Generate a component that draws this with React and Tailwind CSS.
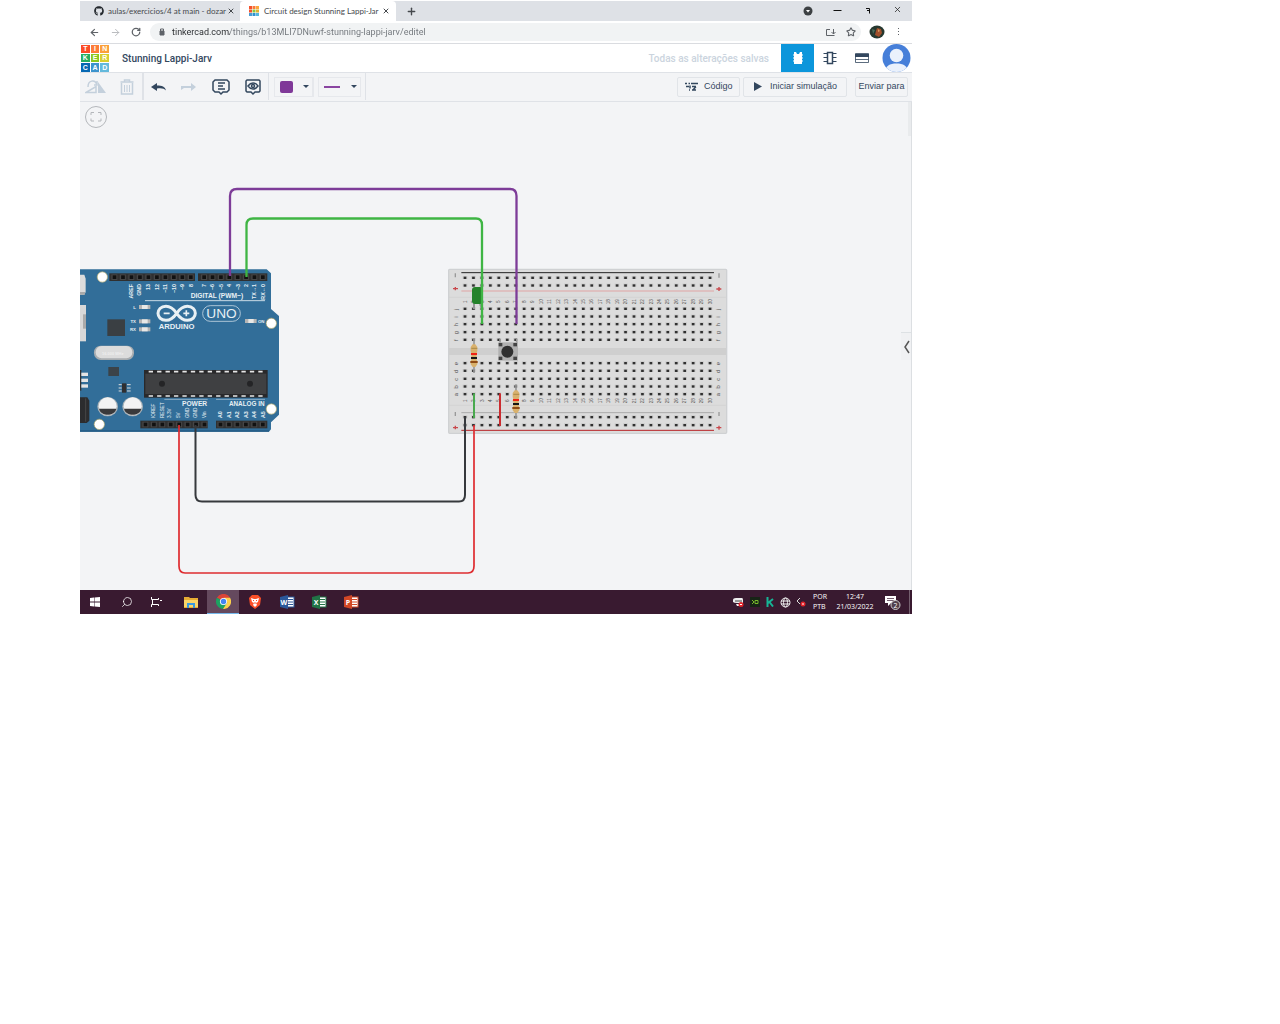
import React from "react";
import { FaGithub } from "react-icons/fa";
import { ArrowLeft, ArrowRight, RotateCw, Plus, X, Search, Star } from "lucide-react";

const range = (n) => Array.from({ length: n }, (_, i) => i);

/* ---------- Browser chrome ---------- */

const LOGO = [
  ["T", "bg-[#fb4b26]"], ["I", "bg-[#fc7c3a]"], ["N", "bg-[#fba03a]"],
  ["K", "bg-[#27ae60]"], ["E", "bg-[#8cc81e]"], ["R", "bg-[#d8cf30]"],
  ["C", "bg-[#0668b3]"], ["A", "bg-[#3d94cd]"], ["D", "bg-[#63b9dc]"],
];

function TinkercadFavicon() {
  const colors = ["#f4512c", "#f9793d", "#fba93c", "#f4512c", "#8bc53f", "#e0b030", "#4a9bd0", "#2f8fd0", "#54b7dd"];
  return (
    <svg className="h-[10px] w-[10px] shrink-0" viewBox="0 0 10 10" aria-hidden="true">
      {colors.map((c, i) => (
        <rect key={i} x={(i % 3) * 3.5} y={Math.floor(i / 3) * 3.5} width="3" height="3" fill={c} />
      ))}
    </svg>
  );
}

function TabStrip() {
  return (
    <div className="flex h-5 items-stretch bg-[#dee1e6] text-[#45494d]">
      <div className="flex w-40 items-center pl-[14px] pr-1">
        <FaGithub className="h-[10px] w-[10px] shrink-0 text-[#24292e]" />
        <a href="#github" className="ml-1 w-[115px] whitespace-nowrap font-['Lato'] text-[8px]">aulas/exercicios/4 at main - dozar</a>
        <button aria-label="Fechar guia" className="ml-[3px] flex h-3 w-3 items-center justify-center"><X size={8} strokeWidth={3} /></button>
      </div>
      <div className="flex w-[156px] items-center rounded-t bg-white pl-[9px] pr-1">
        <TinkercadFavicon />
        <a href="#circuit" className="ml-[5px] w-[113px] whitespace-nowrap font-['Lato'] text-[8px]">Circuit design Stunning Lappi-Jar</a>
        <button aria-label="Fechar guia" className="ml-[3px] flex h-3 w-3 items-center justify-center"><X size={8} strokeWidth={3} /></button>
      </div>
      <button aria-label="Nova guia" className="flex w-[30px] items-center justify-center"><Plus size={11} strokeWidth={3} /></button>
      <div className="flex-1" />
      <button aria-label="Pesquisar guias" className="flex w-6 items-center justify-center">
        <svg width="10" height="10" viewBox="0 0 10 10"><circle cx="5" cy="5" r="4.500" fill="#3c4043" /><path d="M3 4h4L5 6.500z" fill="#fff" /></svg>
      </button>
      <button aria-label="Minimizar" className="ml-[1px] flex w-8 items-center justify-center">
        <svg width="9" height="9" viewBox="0 0 9 9"><path d="M0.500 3.500h8" stroke="#111" /></svg>
      </button>
      <button aria-label="Restaurar" className="flex w-[30px] items-center justify-center">
        <svg width="6" height="8" viewBox="0 0 6 8"><path d="M1 1.500h3.500v5M2 3.500h2" fill="none" stroke="#111" /></svg>
      </button>
      <button aria-label="Fechar" className="flex w-[29px] items-center justify-center pb-1 text-[#222]"><X size={9} /></button>
    </div>
  );
}

function AddressBar() {
  return (
    <div className="flex h-[23px] items-center border-b border-[#dadce0] bg-white text-[#5f6368]">
      <button aria-label="Voltar" className="ml-2 flex w-3 justify-center"><ArrowLeft size={11} strokeWidth={2.5} /></button>
      <button aria-label="Avançar" className="ml-[9px] flex w-3 justify-center text-[#b5b7ba]"><ArrowRight size={11} /></button>
      <button aria-label="Recarregar" className="ml-[9px] flex w-3 justify-center"><RotateCw size={10} strokeWidth={3} /></button>
      <div className="ml-2 flex h-[18px] flex-1 items-center rounded-full bg-[#f1f3f4] pl-[9px]">
        <svg className="shrink-0" width="6" height="8" viewBox="0 0 6 8"><path d="M1 3h4v4H1z" fill="#5f6368" stroke="#5f6368" /><path d="M1.500 3V1h3v2" fill="none" stroke="#5f6368" /></svg>
        <input
          aria-label="Endereço"
          className="ml-[7px] h-3 flex-1 bg-[linear-gradient(90deg,#26292c_58px,#70757a_58px)] bg-clip-text p-0 font-['Roboto'] text-[9px] leading-3 text-transparent outline-none"
          defaultValue="tinkercad.com/things/b13MLI7DNuwf-stunning-lappi-jarv/editel"
        />
        <button aria-label="Instalar" className="mr-[10px] flex">
          <svg width="11" height="9" viewBox="0 0 11 9" fill="none" stroke="#5f6368"><path d="M5 1.500H1.500v6h8M8.500 1v5M6.500 4l2 2 2-2" /></svg>
        </button>
        <button aria-label="Favorito" className="mr-[5px] flex"><Star size={10} strokeWidth={2.5} /></button>
      </div>
      <button aria-label="Perfil" className="ml-2 flex">
        <svg width="16" height="14" viewBox="0 0 16 14">
          <ellipse cx="8" cy="7" rx="7.500" ry="6.500" fill="#26382f" />
          <path d="M8 3l4 1 1 4-3 4-4-2 1-4z" fill="#a14f2b" /><path d="M3 4l3 1-2 4z" fill="#496b5a" /><path d="M9 4l2 2-2 1z" fill="#d89a60" />
        </svg>
      </button>
      <button aria-label="Menu" className="ml-[7px] mr-2 flex w-3 justify-center">
        <svg width="3" height="10" viewBox="0 0 3 10" fill="#5f6368"><rect x="1" y="1" width="1" height="1" /><rect x="1" y="4" width="1" height="1" /><rect x="1" y="7" width="1" height="1" /></svg>
      </button>
    </div>
  );
}

/* ---------- Tinkercad header and toolbar ---------- */

function Header() {
  return (
    <header className="flex h-7 items-center bg-white font-['Liberation_Sans'] text-[#33475e]">
      <a href="#home" aria-label="Tinkercad" className="ml-[1px] grid h-[27px] w-7 grid-cols-3 gap-[1px]">
        {LOGO.map(([ch, bg]) => (
          <span key={ch} className={"flex items-center justify-center text-[7px] font-bold leading-none text-white " + bg}>{ch}</span>
        ))}
      </a>
      <h1 className="ml-[13px] font-['Roboto'] text-[10px] font-medium">Stunning Lappi-Jarv</h1>
      <div className="flex-1" />
      <span className="mr-3 font-['Roboto'] text-[10px] font-medium text-[#cbd4de]">Todas as alterações salvas</span>
      <button aria-label="Circuito" className="flex h-7 w-[33px] items-center justify-center bg-[#0c96db]">
        <svg width="12" height="14" viewBox="0 0 12 14" fill="#fff"><path d="M2 1h2l1 2h2l1-2h2v2l1 1-1 1v1l1 1-1 1v1l1 1-1 1v2H2v-2l-1-1 1-1V8L1 7l1-1V5L1 4l1-1z" /></svg>
      </button>
      <button aria-label="Esquema" className="flex w-8 items-center justify-center">
        <svg width="14" height="14" viewBox="0 0 14 14" fill="none" stroke="#33475e"><path d="M4.500 1.500h5v11h-5z" strokeWidth="1.500" /><path d="M0.500 2.500h4M0.500 6.500h4M0.500 10.500h4M9.500 2.500h4M9.500 6.500h4M9.500 10.500h4" /></svg>
      </button>
      <button aria-label="Lista de componentes" className="flex w-8 items-center justify-center">
        <svg width="14" height="10" viewBox="0 0 14 10"><path d="M0.500 0.500h13v9h-13zM0.500 6.500h13" fill="#fff" stroke="#33475e" strokeWidth=".8" /><path d="M0 1h14v3H0z" fill="#33475e" /></svg>
      </button>
      <button aria-label="Conta" className="ml-1 mr-[1px] flex">
        <svg width="29" height="28" viewBox="0 0 29 28">
          <defs><clipPath id="avatar"><circle cx="14.500" cy="14" r="14" /></clipPath></defs>
          <g clipPath="url(#avatar)"><rect width="29" height="28" fill="#467fd9" /><circle cx="14.500" cy="11.500" r="6.800" fill="#eaf1fc" /><path d="M3 28c0-6 5-8.500 11.500-8.500S26 22 26 28z" fill="#eaf1fc" /></g>
        </svg>
      </button>
    </header>
  );
}

const toolBtn = "flex h-full items-center justify-center";
const textBtn = "flex h-5 items-center border border-[#e1e4e8] whitespace-nowrap font-['Liberation_Sans'] text-[9px] text-[#33475e] rounded-[2px]";

function Toolbar() {
  return (
    <div className="flex h-[30px] items-center border-b border-t border-[#dfe2e7] bg-[#f3f4f6] pb-[1px]">
      <button aria-label="Girar" className={toolBtn + " w-8"}>
        <svg width="22" height="14" viewBox="0 0 22 14"><path d="M1 12.500L11 6.500v6z" fill="none" stroke="#c4d0dc" strokeWidth="1.500" /><path d="M13 2l8 11h-8z" fill="#c4d0dc" /><path d="M3 7c0-7 7-8 9-2M12 1v4H9" fill="none" stroke="#c4d0dc" strokeWidth="1.500" /></svg>
      </button>
      <button aria-label="Excluir" className={toolBtn + " w-8 border-r-2 border-[#dfe2e7]"}>
        <svg width="14" height="16" viewBox="0 0 14 16" fill="none" stroke="#c4d0dc"><path d="M1.500 4v11h11V4M0.500 3h13M4.500 3V1h5v2" strokeWidth="1.500" /><path d="M4.500 6v7M7 6v7M9.500 6v7" /></svg>
      </button>
      <button aria-label="Desfazer" className={toolBtn + " w-[30px]"}>
        <svg width="16" height="10" viewBox="0 0 16 10" fill="#33475e"><path d="M6 1v2.500c5 0 8 1 9 5-2-2-4-2.500-9-2V9L0 5z" /></svg>
      </button>
      <button aria-label="Refazer" className={toolBtn + " w-[30px]"}>
        <svg width="16" height="10" viewBox="0 0 16 10" fill="#c4d0dc"><path d="M0 4h10V1l5 4-5 4V6H3L0 8z" /></svg>
      </button>
      <button aria-label="Anotação" className={toolBtn + " w-[34px]"}>
        <svg width="18" height="18" viewBox="0 0 18 18" fill="none" stroke="#33475e" strokeWidth="1.500"><path d="M3 2h12l2 2v8l-2 2h-4l-2 2-2-2H3l-2-2V4z" /><path d="M6 5h7M6 8h5M6 11h7" /></svg>
      </button>
      <button aria-label="Mostrar anotações" className={toolBtn + " w-[31px] border-r border-[#dfe2e7]"}>
        <svg width="16" height="18" viewBox="0 0 16 18" fill="none" stroke="#33475e" strokeWidth="1.500"><path d="M2 2h12l1 1v10l-1 1h-4l-2 2-2-2H2l-1-1V3z" /><path d="M3 8c3-4 7-4 10 0-3 4-7 4-10 0z" /><circle cx="8" cy="8" r="1.500" /></svg>
      </button>
      <button aria-label="Cor do fio" className="ml-[5px] flex h-5 w-10 items-center border border-r-2 border-[#e6e8ec] pl-[5px]">
        <span className="h-3 w-[13px] rounded-[2px] bg-[#7f3898]" />
        <svg className="ml-[10px]" width="6" height="3" viewBox="0 0 6 3"><path d="M0 0h6L3 3z" fill="#33475e" /></svg>
      </button>
      <button aria-label="Tipo de fio" className="ml-1 flex h-5 w-[43px] items-center border border-[#e6e8ec] pl-[5px]">
        <span className="h-[2px] w-4 bg-[#8a45a1]" />
        <svg className="ml-[11px]" width="6" height="3" viewBox="0 0 6 3"><path d="M0 0h6L3 3z" fill="#33475e" /></svg>
      </button>
      <div className="ml-1 h-full w-[1px] bg-[#dfe2e7]" />
      <div className="flex-1" />
      <button className={textBtn + " w-[63px] pl-[7px]"}>
        <svg className="mr-[6px]" width="13" height="10" viewBox="0 0 13 10" fill="none" stroke="#33475e" strokeWidth="1.500"><path d="M0 1.500h2M3.500 1.500h1.500M6 1.500h7M1 4.500h3M7 4.500h4M4 8h1M7 8h4M5 3.500v3M11 4.500L8 8" /></svg>
        Código
      </button>
      <button className={textBtn + " ml-[3px] w-[104px] pl-[10px]"}>
        <svg className="mr-2" width="8" height="9" viewBox="0 0 8 9"><path d="M0 0l8 4.500L0 9z" fill="#33475e" /></svg>
        Iniciar simulação
      </button>
      <button className={textBtn + " ml-2 mr-1 w-[53px] justify-center"}>Enviar para</button>
    </div>
  );
}

/* ---------- Circuit drawing ---------- */

function PinRow({ x, w, y, first, last, n }) {
  return (
    <g>
      <rect x={x} y={y} width={w} height="23" fill="#303030" />
      {range(n).map((i) => {
        const cx = first + ((last - first) * i) / (n - 1);
        return (
          <g key={i}>
            <rect x={cx - 9} y={y + 3} width="18" height="17" fill="#454545" />
            <rect x={cx - 5} y={y + 6} width="11" height="11" fill="#111" />
          </g>
        );
      })}
    </g>
  );
}

const TOP_LABELS = [[152, "AREF"], [178, "GND"], [205, "13"], [230, "12"], [256, "~11"], [281, "~10"], [306, "~9"], [332, "8"], [372, "7"], [397, "~6"], [422, "~5"], [448, "4"], [473, "~3"], [498, "2"], [523, "TX→1"], [548, "RX←0"]];
const BOTTOM_LABELS = [[218, "IOREF"], [245, "RESET"], [268, "3.3V"], [295, "5V"], [320, "GND"], [346, "GND"], [373, "Vin"], [421, "A0"], [446, "A1"], [472, "A2"], [498, "A3"], [523, "A4"], [548, "A5"]];

function Chip({ x, y, label }) {
  return (
    <g>
      <rect x={x} y={y} width="34" height="12" fill="#b5b5b5" /><rect x={x + 9} y={y} width="17" height="12" fill="#e8e8e6" />
      <text x={x - 9} y={y + 11} textAnchor="end" fontSize="13">{label}</text>
    </g>
  );
}

function Arduino() {
  return (
    <g transform="translate(80 260) scale(.33333)" fill="#e8f0f4" fontFamily="'Liberation Sans', sans-serif" fontWeight="bold">
      <path d="M0 28H560L573 40V147L597 168V464L573 487V508L567 515H0z" fill="#326e99" />
      <path d="M0 513H567" stroke="#255b84" strokeWidth="4" />
      <path d="M0 44h13l4 12v40l-4 8H0z" fill="#dcdcdc" /><path d="M0 96h15v8H0z" fill="#aaa" />
      <path d="M0 135h18v109H0z" fill="#d8d8d8" /><path d="M9 163h9v43H9z" fill="#aaa" />
      <rect x="0" y="330" width="4" height="62" fill="#333" />
      {[338, 356, 373].map((y) => <rect key={y} x="4" y={y} width="20" height="10" fill="#e4e4e4" />)}
      <path d="M0 412h22l6 10v60l-8 7H0z" fill="#2c2c2e" /><path d="M17 415v70" stroke="#555" strokeWidth="2" />
      <PinRow x={88} w={257} y={40} first={103} last={332} n={10} />
      <PinRow x={354} w={208} y={40} first={372} last={548} n={8} />
      <PinRow x={181} w={202} y={482} first={196} last={373} n={8} />
      <PinRow x={408} w={154} y={482} first={421} last={548} n={6} />
      {[[67, 51], [574, 190], [574, 447], [58, 493]].map(([x, y]) => (
        <circle key={x + y} cx={x} cy={y} r="15.500" fill="#fff" stroke="#b3a866" strokeWidth="2" />
      ))}
      {TOP_LABELS.map(([x, t]) => <text key={x} transform={`translate(${x + 6} 72) rotate(-90)`} textAnchor="end" fontSize="16">{t}</text>)}
      {BOTTOM_LABELS.map(([x, t]) => <text key={x} transform={`translate(${x + 6} 474) rotate(-90)`} fontSize={x < 400 ? "14" : "16"} fontWeight={x < 400 ? "normal" : "bold"}>{t}</text>)}
      <text x="332" y="115" fontSize="20">DIGITAL (PWM~)</text>
      <path d="M195 122H555" stroke="#e8f0f4" strokeWidth="2.500" />
      <path d="M253 418H383M408 418H555" stroke="#b9cedd" strokeWidth="2" />
      <text x="306" y="438" fontSize="20">POWER</text>
      <text x="447" y="438" fontSize="19">ANALOG IN</text>
      <Chip x={177} y={135} label="L" /><Chip x={177} y={178} label="TX" /><Chip x={177} y={202} label="RX" />
      <rect x="495" y="177" width="35" height="12" fill="#b5b5b5" /><rect x="505" y="177" width="16" height="12" fill="#e8e8e6" />
      <text x="534" y="188" fontSize="13">ON</text>
      <g fill="none" stroke="#e8f0f4">
        <path d="M290 160C278 143 270 139 258 139C226 139 226 181 258 181C270 181 278 177 290 160C302 143 310 139 322 139C354 139 354 181 322 181C310 181 302 177 290 160z" strokeWidth="9" />
        <path d="M251 160h18M310 160h18M319 151v18" strokeWidth="5" />
        <rect x="368" y="137" width="113" height="47" rx="23" strokeWidth="2" />
      </g>
      <text x="236" y="207" fontSize="23">ARDUINO</text>
      <text x="379" y="175" fontSize="41" fontWeight="normal">UNO</text>
      <rect x="82" y="178" width="53" height="50" fill="#3a3f43" />
      <rect x="85" y="321" width="32" height="27" fill="#3b4349" />
      <rect x="42" y="257" width="120" height="43" rx="20" fill="#a9adb0" /><rect x="47" y="258" width="110" height="37" rx="18" fill="#dcdcdc" />
      <text x="66" y="285" fontSize="12" fill="#eee">16.000 MHz</text>
      <rect x="126" y="370" width="13" height="28" fill="#2f2f31" />
      {[374, 384, 393].map((y) => <path key={y} d={`M116 ${y}h9M141 ${y}h11`} stroke="#ddd" strokeWidth="3" />)}
      {[83, 158].map((x) => (
        <g key={x}>
          <ellipse cx={x} cy="440" rx="31" ry="29" fill="#aab3b9" /><circle cx={x} cy="439" r="27" fill="#f3f3f3" />
          <path d={`M${x - 26} 446h52c-5 24-47 24-52 0z`} fill="#39393b" />
        </g>
      ))}
      <rect x="192" y="330" width="371" height="83" fill="#29292b" /><rect x="196" y="341" width="363" height="61" fill="#3f4042" />
      {range(14).map((i) => <path key={i} d={`M${206 + i * 25.3} 335h13M${206 + i * 25.3} 408h13`} stroke="#e6e6e6" strokeWidth="5" />)}
      <circle cx="246" cy="371" r="9" fill="#242426" /><circle cx="510" cy="371" r="9" fill="#242426" />
    </g>
  );
}

const HOLE_ROWS = [53, 76, 146, 169, 192, 216, 239, 309, 332, 356, 379, 402, 471, 495];
const ROW_LETTERS = [["j", 146], ["i", 169], ["h", 192], ["g", 216], ["f", 239], ["e", 309], ["d", 332], ["c", 356], ["b", 379], ["a", 402]];

function Resistor({ x, y }) {
  return (
    <g transform={`translate(${x} ${y})`}>
      <path d="M0-18v104" stroke="#999" strokeWidth="5" />
      <path d="M-4 0H4L10 8V20L8 26V46L10 52V60L4 68H-4L-10 60V52L-8 46V26L-10 20V8z" fill="#d9b16c" />
      <path d="M-8 12H10" stroke="#927637" strokeWidth="2" />
      <path d="M-9 29H9" stroke="#f02214" strokeWidth="6" />
      <path d="M-9 41H9" stroke="#151515" strokeWidth="6" />
      <path d="M-11 53H11" stroke="#8f4b16" strokeWidth="6" />
    </g>
  );
}

function Breadboard() {
  return (
    <g transform="translate(440 260) scale(.33333)" fontFamily="'Liberation Sans', sans-serif" fill="#555">
      <rect x="26" y="28" width="834" height="492" rx="3" fill="#dcdcdc" stroke="#cfd1d3" strokeWidth="4" />
      <path d="M27 112H858M27 436H858" stroke="#d0d0d0" strokeWidth="2" />
      <rect x="27" y="264" width="831" height="21" fill="#cfcfcf" />
      <path d="M64 38H822" stroke="#222" strokeWidth="3" />
      <path d="M64 93H822" stroke="#dfb7b7" strokeWidth="5" />
      <path d="M64 458H822" stroke="#aaa" strokeWidth="3" />
      <path d="M64 511H822" stroke="#b82226" strokeWidth="3" />
      {HOLE_ROWS.map((y) => range(30).map((i) => (
        <g key={`${y}-${i}`}>
          <rect x={68 + i * 25.35} y={y - 5} width="14" height="9" fill="#c8c8c8" />
          <rect x={71 + i * 25.35} y={y - 3} width="8" height="7" fill="#303030" />
        </g>
      )))}
      {range(30).map((i) => (
        <g key={i} fontSize="14" textAnchor="middle">
          <text transform={`translate(${80 + i * 25.35} 125) rotate(-90)`}>{i + 1}</text>
          <text transform={`translate(${80 + i * 25.35} 422) rotate(-90)`}>{i + 1}</text>
        </g>
      ))}
      {ROW_LETTERS.map(([t, y]) => (
        <g key={t} fontSize="17" textAnchor="middle">
          <text transform={`translate(55 ${y + 2}) rotate(-90)`}>{t}</text>
          <text transform={`translate(840 ${y + 2}) rotate(-90)`}>{t}</text>
        </g>
      ))}
      <path d="M46 40v12M46 456v12M837 40v13M837 456v12" stroke="#999" strokeWidth="4" />
      <path d="M39 86h15M46 81v10M39 503h15M46 497v11M829 87h15M837 81v12M829 503h15M837 497v12" stroke="#c9484c" strokeWidth="4" />
    </g>
  );
}

function Components() {
  return (
    <g transform="translate(440 260) scale(.33333)">
      <path d="M102 400V474" stroke="#4aa94e" strokeWidth="6" />
      <path d="M180 400V498" stroke="#cb2c30" strokeWidth="6" />
      <path d="M102 130v18M120 132l6 14" stroke="#969696" strokeWidth="6" />
      <path d="M180 237v15M230 237v15" stroke="#999" strokeWidth="5" />
      <rect x="175" y="247" width="59" height="55" fill="#b1b1b1" />
      {[[181, 254], [225, 254], [181, 295], [225, 295]].map(([x, y]) => <rect key={x + "-" + y} x={x - 5} y={y - 5} width="11" height="10" fill="#444" />)}
      <circle cx="202" cy="275" r="18" fill="#303030" />
      <Resistor x={102} y={253} />
      <Resistor x={228} y={391} />
    </g>
  );
}

function Canvas() {
  return (
    <main className="relative bg-[#f3f4f6]">
      <svg className="block h-[488px] w-full" viewBox="80 102 832 488" preserveAspectRatio="xMinYMin meet" role="img" aria-label="Circuito Arduino">
        <Arduino />
        <Breadboard />
        <Components />
        <path d="M472 290q0-3 3-3h5q3 0 3 3v11q0 3-3 3h-5q-3 0-3-3z" fill="#25822a" />
        <g fill="none">
          <path d="M230 276V196Q230 189 237 189H510Q516.500 189 516.500 196V324" stroke="#7d3c98" strokeWidth="2.300" />
          <path d="M246.500 277V225Q246.500 218.500 253 218.500H476Q482 218.500 482 225V324" stroke="#3fb544" strokeWidth="2.300" />
          <path d="M195.500 425V495Q195.500 501.500 202 501.500H459Q465 501.500 465 495V417" stroke="#36393d" strokeWidth="2" />
          <path d="M179 425V566Q179 573 185 573H468Q474 573 474 566V425" stroke="#de2c30" strokeWidth="1.700" />
        </g>
      </svg>
      <div className="absolute inset-y-0 right-0 w-[1px] bg-[#dcdfe2]" />
      <div className="absolute right-[1px] top-0 h-[34px] w-[3px] bg-[#e9ebed]" />
      <button aria-label="Ajustar à tela" className="absolute left-[5px] top-1 flex">
        <svg width="22" height="22" viewBox="0 0 22 22" fill="none" stroke="#b4b7bb"><circle cx="11" cy="11" r="10.500" /><path d="M6 9V6.500h3M13 6.500h3V9M16 12.500V15h-3M9 15H6v-2.500" /></svg>
      </button>
      <button aria-label="Abrir painel" className="absolute right-[1px] top-[230px] flex h-7 w-[10px] items-center justify-end border-t border-[#dde1e4] bg-[#f0f1f3]">
        <svg width="8" height="14" viewBox="0 0 8 14" fill="none" stroke="#555" strokeWidth="1.500"><path d="M6 1L2 7l4 6" /></svg>
      </button>
    </main>
  );
}

/* ---------- Windows taskbar ---------- */

function OfficeIcon({ color, letter }) {
  return (
    <svg width="16" height="14" viewBox="0 0 16 14">
      <rect x="8" y="2" width="7" height="10" fill="#fff" stroke={color} />
      <path d="M9 4.500h5M9 7h5M9 9.500h5" stroke={color} />
      <path d="M1 2l8-2v14l-8-2z" fill={color} />
      <text x="5" y="10" textAnchor="middle" fontSize="7" fontWeight="bold" fill="#fff">{letter}</text>
    </svg>
  );
}

const taskBtn = "flex h-full w-8 items-center justify-center";

function Taskbar() {
  return (
    <footer className="flex h-6 items-center bg-[#391a30] text-white">
      <button aria-label="Iniciar" className="flex h-full w-[31px] items-center justify-center">
        <svg width="11" height="10" viewBox="0 0 11 10" fill="#fff"><path d="M0 1l4-.5V4.500H0zM4.500 .5L10 0v4.500H4.500zM0 5.500h4v4L0 9zM4.500 5.500H10V10l-5.500-.5z" /></svg>
      </button>
      <button aria-label="Pesquisar" className={taskBtn}><Search size={12} strokeWidth={1.5} className="-scale-x-100" /></button>
      <button aria-label="Visão de tarefas" className={taskBtn + " pr-1"}>
        <svg width="12" height="10" viewBox="0 0 12 10" fill="none" stroke="#fff"><path d="M0.500 0v2.500h7V1M0.500 10V7.500h7V9M1.500 2v5M9 3.500h2" /></svg>
      </button>
      <button aria-label="Explorador de Arquivos" className={taskBtn}>
        <svg width="14" height="11" viewBox="0 0 14 11"><path d="M0 0h5l1 1h8v10H0z" fill="#e7ac34" /><path d="M0 3h14v7H0z" fill="#fbd568" /><path d="M3 11V6h8v5H9V8H5v3z" fill="#3a9ae0" /></svg>
      </button>
      <button aria-label="Chrome" className={taskBtn + " border-b border-[#76b9ed] bg-[#65495e]"}>
        <svg width="15" height="15" viewBox="0 0 16 16"><path d="M8 8L1 4A8 8 0 0 1 15 4z" fill="#db4437" /><path d="M8 8L1 4a8 8 0 0 0 6.500 12L12 10z" fill="#1da261" /><path d="M8 4h7a8 8 0 0 1-7.500 12L12 9z" fill="#fcd04b" /><circle cx="8" cy="8" r="3.800" fill="#fff" /><circle cx="8" cy="8" r="2.900" fill="#4285f4" /></svg>
      </button>
      <button aria-label="Brave" className={taskBtn}>
        <svg width="12" height="14" viewBox="0 0 12 14"><path d="M3 0h6l3 3-1 7-5 4-5-4-1-7z" fill="#fb4f28" /><path d="M2 3l3 1h2l3-1-1 4-2 1 1 2-2 2-2-2 1-2-2-1z" fill="#fff" /><path d="M4 5l1 1M8 5L7 6M5 8h2" stroke="#fb4f28" /></svg>
      </button>
      <button aria-label="Word" className={taskBtn}><OfficeIcon color="#2b579a" letter="W" /></button>
      <button aria-label="Excel" className={taskBtn}><OfficeIcon color="#217346" letter="X" /></button>
      <button aria-label="PowerPoint" className={taskBtn}><OfficeIcon color="#d24726" letter="P" /></button>
      <div className="flex-1" />
      <svg width="11" height="10" viewBox="0 0 11 10"><path d="M0 3q0-2 3-2h6q1 0 1 2v3H4q-3 0-4-1z" fill="#eee" /><path d="M2 4h7" stroke="#444" /><path d="M3 7h4v2H4z" fill="#eee" /><circle cx="8" cy="7.500" r="2.500" fill="#e3242b" /><path d="M7 7.500h2" stroke="#fff" /></svg>
      <svg className="ml-[6px]" width="10" height="10" viewBox="0 0 10 10"><rect width="10" height="10" fill="#172416" /><path d="M2 3l2 2-2 2M5 3.500h3v3H5z" fill="none" stroke="#77b82a" /></svg>
      <svg className="ml-[6px]" width="8" height="10" viewBox="0 0 8 10"><path d="M1.500 0v10M2 6l5-4M3.500 5L7 9.500" fill="none" stroke="#16b596" strokeWidth="2" /></svg>
      <svg className="ml-[6px]" width="11" height="11" viewBox="0 0 11 11" fill="none" stroke="#eee"><circle cx="5.500" cy="5.500" r="4.500" /><ellipse cx="5.500" cy="5.500" rx="2" ry="4.500" /><path d="M1 4h9M1 7h9" /></svg>
      <svg className="ml-[5px]" width="10" height="10" viewBox="0 0 10 10"><path d="M4 1L1 4l3 3" fill="none" stroke="#ddd" /><circle cx="7" cy="7" r="2.500" fill="#e3242b" /><path d="M6 7h2" stroke="#fff" /></svg>
      <div className="ml-[7px] w-4 text-[7px] leading-[10px]">POR<br />PTB</div>
      <div className="ml-[6px] w-10 text-center text-[7px] leading-[10px]">12:47<br />21/03/2022</div>
      <button aria-label="Notificações" className="ml-[9px] mr-2 flex">
        <svg width="17" height="16" viewBox="0 0 17 16"><path d="M1 2h11v7H7l-3 3V9H1z" fill="#fff" /><path d="M3 4.500h7M3 6.500h7" stroke="#391a30" strokeWidth=".7" /><circle cx="11.500" cy="11" r="4.500" fill="#51404b" stroke="#ccc" /><text x="11.500" y="13.500" textAnchor="middle" fontSize="7" fill="#fff">2</text></svg>
      </button>
      <div className="mr-[2px] h-full w-[1px] bg-[#75606f]" />
    </footer>
  );
}

export default function App() {
  return (
    <div className="bg-white pl-20 pr-[368px] pt-[1px] font-['Open_Sans',sans-serif]">
      <TabStrip />
      <AddressBar />
      <Header />
      <Toolbar />
      <Canvas />
      <Taskbar />
    </div>
  );
}
